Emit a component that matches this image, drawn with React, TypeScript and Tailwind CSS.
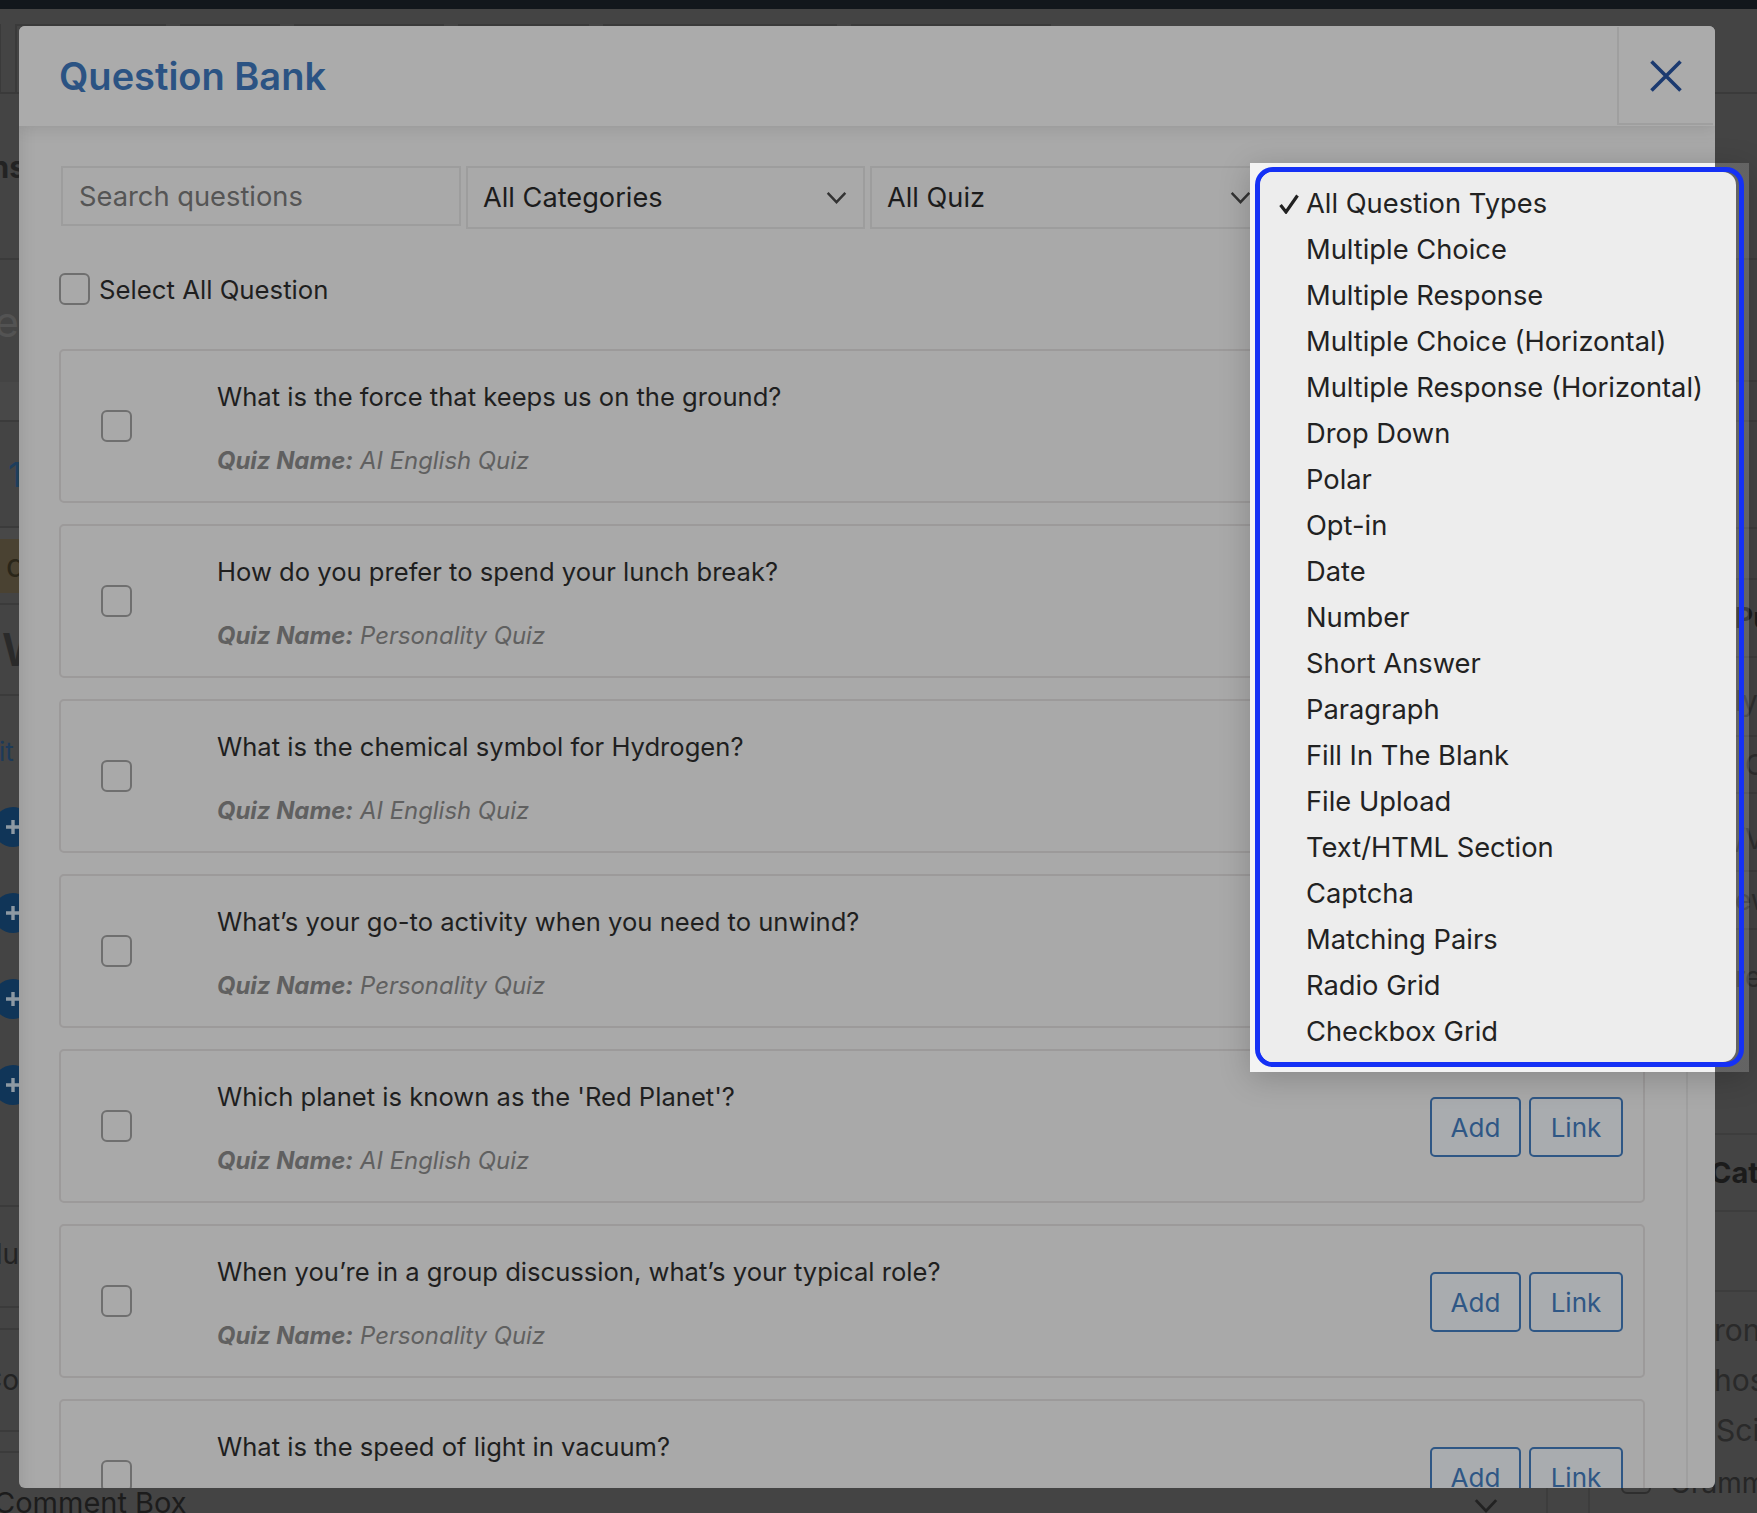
import React from "react";

const questions = [
  ["What is the force that keeps us on the ground?", "AI English Quiz"],
  ["How do you prefer to spend your lunch break?", "Personality Quiz"],
  ["What is the chemical symbol for Hydrogen?", "AI English Quiz"],
  ["What’s your go-to activity when you need to unwind?", "Personality Quiz"],
  ["Which planet is known as the 'Red Planet'?", "AI English Quiz"],
  ["When you’re in a group discussion, what’s your typical role?", "Personality Quiz"],
  ["What is the speed of light in vacuum?", "AI English Quiz"],
];

const types = [
  "All Question Types", "Multiple Choice", "Multiple Response", "Multiple Choice (Horizontal)",
  "Multiple Response (Horizontal)", "Drop Down", "Polar", "Opt-in", "Date", "Number", "Short Answer",
  "Paragraph", "Fill In The Blank", "File Upload", "Text/HTML Section", "Captcha", "Matching Pairs",
  "Radio Grid", "Checkbox Grid",
];

function Chevron({ className }: { className: string }) {
  return (
    <svg viewBox="0 0 22 14" className={className} fill="none" stroke="currentColor" strokeWidth="2.6">
      <path d="M1.5 2 L11 12 L20.5 2" />
    </svg>
  );
}

function Check() {
  return <div className="w-[31px] h-[32px] shrink-0 rounded-[6px] border-2 border-[#6f6f6f]" />;
}

function SelectBox({ label }: { label: string }) {
  return (
    <div className="w-[399px] h-[63px] shrink-0 border-2 border-[#9d9d9d] flex items-center pl-[15px] pr-[16px] text-[27.2px] text-[#1c1c1c]">
      <span className="mt-[2px]">{label}</span>
      <Chevron className="ml-auto w-[21px] h-[13px] text-[#333]" />
    </div>
  );
}

function Circle() {
  return (
    <div className="w-[40px] h-[40px] -ml-[7px] shrink-0 rounded-full bg-[#103558] flex items-center justify-center">
      <svg viewBox="0 0 20 20" className="w-[20px] h-[20px]" fill="none" stroke="#8d99a3" strokeWidth="3.4">
        <path d="M10 3 V17 M3 10 H17" />
      </svg>
    </div>
  );
}

function LeftRow({ h, line, children, extra }: { h: string; line?: boolean; children?: React.ReactNode; extra?: string }) {
  return (
    <div className={`${h} ${extra ?? ""} ${line ? "border-b-2 border-[#3b3b3b]" : ""} flex items-center justify-end overflow-hidden whitespace-nowrap`}>
      {children}
    </div>
  );
}

function RightRow({ h, children }: { h: string; children?: React.ReactNode }) {
  return (
    <div className={`${h} border-b-2 border-[#3d3d3d] flex items-center overflow-hidden whitespace-nowrap`}>
      {children}
    </div>
  );
}

export default function App() {
  return (
    <div className="relative w-[1757px] h-[1513px] overflow-hidden bg-[#444444] font-[Inter,sans-serif]">
      <div className="h-[9px] bg-[#12171c]" />
      <div className="h-[15px]" />
      <div className="h-[70px] flex gap-[14px] -ml-[30px] border-b-2 border-[#3a3a3a]">
        <div className="w-[31px] border-2 border-b-0 border-[#3a3a3a]" />
        <div className="w-[151px] border-2 border-b-0 border-[#3a3a3a]" />
        <div className="w-[100px] border-2 border-b-0 border-[#3a3a3a]" />
        <div className="w-[150px] border-2 border-b-0 border-[#3a3a3a]" />
        <div className="w-[131px] border-2 border-b-0 border-[#3a3a3a]" />
        <div className="w-[234px] border-2 border-b-0 border-[#3a3a3a]" />
        <div className="w-[200px] border-2 border-b-0 border-[#3a3a3a]" />
      </div>

      <div className="h-[1381px] flex">
        <div className="w-[19px] shrink-0 flex flex-col overflow-hidden">
          <LeftRow h="h-[166px]" line><span className="text-[30px] font-bold text-[#232323] -mt-[18px] -mr-[7px]">Columns</span></LeftRow>
          <LeftRow h="h-[122px]" line={false}><span className="text-[42px] text-[#535353]">Title</span></LeftRow>
          <LeftRow h="h-[40px]" line extra="bg-[#484848]" />
          <div className="h-[106px] border-b-2 border-[#3b3b3b] flex items-center text-[#1e3e5c] text-[34px]">
            <span className="ml-[8px]">1</span>
          </div>
          <div className="h-[11px] bg-[#484848]" />
          <div className="h-[54px] bg-[#4a4232] flex items-center overflow-hidden">
            <span className="ml-[6px] text-[32px] text-[#2a2619]">q</span>
          </div>
          <LeftRow h="h-[12px]" line />
          <div className="h-[91px] border-b-2 border-[#3b3b3b] flex items-center overflow-hidden">
            <span className="ml-[2px] text-[45px] font-semibold text-[#2a2a2a]">W</span>
          </div>
          <div className="h-[511px] border-b-2 border-[#3b3b3b] flex flex-col overflow-hidden">
            <div className="h-[111px] shrink-0 flex items-center text-[26px] text-[#1d3a59]"><span className="-ml-[1px]">it</span></div>
            <div className="flex flex-col gap-[46px]">
              <Circle />
              <Circle />
              <Circle />
              <Circle />
            </div>
          </div>
          <LeftRow h="h-[101px]" line><span className="text-[28px] text-[#232323] -mt-[6px]">Fillu</span></LeftRow>
          <LeftRow h="h-[22px]" line />
          <LeftRow h="h-[102px]" line><span className="text-[28px] text-[#232323]">Co</span></LeftRow>
          <LeftRow h="h-[21px]" line />
          <div className="h-[22px]" />
        </div>

        <div className="flex-1" />

        <div className="w-[42px] shrink-0 flex flex-col overflow-hidden text-[#2e2e2e] text-[28px]">
          <RightRow h="h-[166px]" />
          <RightRow h="h-[122px]" />
          <RightRow h="h-[40px]" />
          <RightRow h="h-[107px]" />
          <RightRow h="h-[51px]" />
          <RightRow h="h-[78px]"><span className="pl-[20px] font-bold text-[#1b1b1b]">Pu</span></RightRow>
          <RightRow h="h-[79px]"><span className="pl-[20px] mt-[8px]">ly</span></RightRow>
          <RightRow h="h-[57px]"><span className="pl-[30px]">C</span></RightRow>
          <RightRow h="h-[78px]"><span className="pl-[20px] mt-[14px]">/Vi</span></RightRow>
          <RightRow h="h-[58px]"><span className="pl-[20px]">ew</span></RightRow>
          <div className="h-[205px] pt-[26px] pl-[20px] border-b-2 border-[#3d3d3d] whitespace-nowrap">re</div>
          <RightRow h="h-[77px]"><span className="-ml-[5px] font-bold text-[29px] text-[#1b1b1b]">Cate</span></RightRow>
          <RightRow h="h-[80px]" />
          <div className="flex-1 flex flex-col pt-[20px] gap-[14px] whitespace-nowrap text-[30px] text-[#2a2a2a]">
            <span className="leading-[36px] -ml-[1px]">ronology</span>
            <span className="leading-[36px] -ml-[1px]">hosphere</span>
            <span className="leading-[36px] pl-[1px]">Science</span>
          </div>
        </div>
      </div>

      <div className="h-[38px] flex items-start text-[#1c1c1c] text-[29px]">
        <span className="-ml-[6px] w-[1478px] shrink-0 mt-[11px] leading-[34px] whitespace-nowrap">Comment Box</span>
        <Chevron className="w-[28px] h-[15px] shrink-0 mt-[23px] text-[#222]" />
        <div className="w-[46px] shrink-0" />
        <div className="w-[44px] h-full shrink-0 border-x-2 border-[#3d3d3d]" />
        <div className="w-[31px] shrink-0" />
        <div className="w-[30px] h-[19px] shrink-0 rounded-b-[6px] border-2 border-[#2e2e2e]" />
        <span className="ml-[19px] -mt-[9px] leading-[34px] text-[28px] text-[#262626]">Grammar</span>
      </div>

      {/* modal */}
      <div className="absolute left-[19px] top-[26px] w-[1696px] h-[1462px] rounded-[6px] overflow-hidden bg-[#a9a9a9] flex flex-col">
        <div className="h-[100px] shrink-0 bg-[#ababab] flex items-center pl-[40px] shadow-[0_5px_14px_rgba(0,0,0,0.08)] relative z-10">
          <h1 className="text-[38px] mt-[1px] font-semibold text-[#2b5383]">Question Bank</h1>
          <div className="ml-auto mr-[2px] w-[96px] h-[98px] border-l-2 border-b-2 border-[#9f9f9f] flex items-center justify-center">
            <svg viewBox="0 0 32 32" className="w-[32px] h-[32px] mt-[2px]" fill="none" stroke="#1b3a70" strokeWidth="3.6">
              <path d="M1.5 1.5 L30.5 30.5 M30.5 1.5 L1.5 30.5" />
            </svg>
          </div>
        </div>
        <div className="flex-1 flex overflow-hidden shadow-[inset_14px_0_16px_-12px_rgba(0,0,0,0.1)]">
          <div className="flex-1 pl-[40px] pr-[41px] pt-[40px] overflow-hidden">
            <div className="flex gap-[5px] items-start">
              <input
                placeholder="Search questions"
                readOnly
                className="w-[400px] h-[60px] ml-[2px] shrink-0 border-2 border-[#9d9d9d] bg-transparent pl-[16px] text-[27.3px] outline-none placeholder:text-[#555555]"
              />
              <SelectBox label="All Categories" />
              <SelectBox label="All Quiz" />
            </div>
            <div className="mt-[44px] h-[32px] flex items-center gap-[9px] text-[25.75px] text-[#1f1f1f]">
              <Check />
              <span className="mt-[2px]">Select All Question</span>
            </div>
            <div className="mt-[44px] flex flex-col gap-[21px]">
              {questions.map(([q, quiz]) => (
                <div key={q} className="h-[154px] shrink-0 border-2 border-[#9c9a9a] rounded-[5px] flex items-center pl-[40px] pr-[20px]">
                  <Check />
                  <div className="ml-[85px] flex flex-col gap-[32px] mt-[6px]">
                    <div className="text-[25.6px] leading-[32px] text-[#1f1f1f]">{q}</div>
                    <div className="text-[23.9px] leading-[32px] italic text-[#606060]">
                      <b className="font-bold">Quiz Name:</b> {quiz}
                    </div>
                  </div>
                  <div className="ml-auto mt-[2px] flex gap-[8px] text-[26px] text-[#2f5785]">
                    <div className="w-[91px] h-[60px] border-2 border-[#2f5785] rounded-[5px] bg-[#a9acaf] flex items-center justify-center">Add</div>
                    <div className="w-[94px] h-[60px] border-2 border-[#2f5785] rounded-[5px] bg-[#a9acaf] flex items-center justify-center">Link</div>
                  </div>
                </div>
              ))}
            </div>
          </div>
          <div className="w-[29px] shrink-0 border-l-2 border-[#9f9f9f] mt-[37px]" />
        </div>
      </div>

      {/* native select popup */}
      <div className="absolute left-[1250px] top-[163px] w-[499px] h-[909px] p-[4px_5px_5px_5px] bg-[linear-gradient(90deg,#f3f3f3_0_465px,rgba(255,255,255,0.17)_465px)] shadow-[0_6px_30px_rgba(0,0,0,0.2)]">
        <div className="w-[489px] h-[900px] rounded-[18px] border-[5px] border-[#1531f5] overflow-hidden">
          <div className="w-[476px] h-[890px] rounded-[13px] bg-[#ededed] pt-[9px] text-[27.3px] text-[#222222]">
            {types.map((t, i) => (
              <div key={t} className="h-[46px] flex items-center pl-[46px] relative whitespace-nowrap">
                {i === 0 && (
                  <svg viewBox="0 0 20 20" className="absolute left-[19px] top-[13px] w-[20px] h-[20px]" fill="none" stroke="#222222" strokeWidth="3.2">
                    <path d="M1.5 11 L7 18 L18.5 1.5" />
                  </svg>
                )}
                {t}
              </div>
            ))}
          </div>
        </div>
      </div>
    </div>
  );
}
